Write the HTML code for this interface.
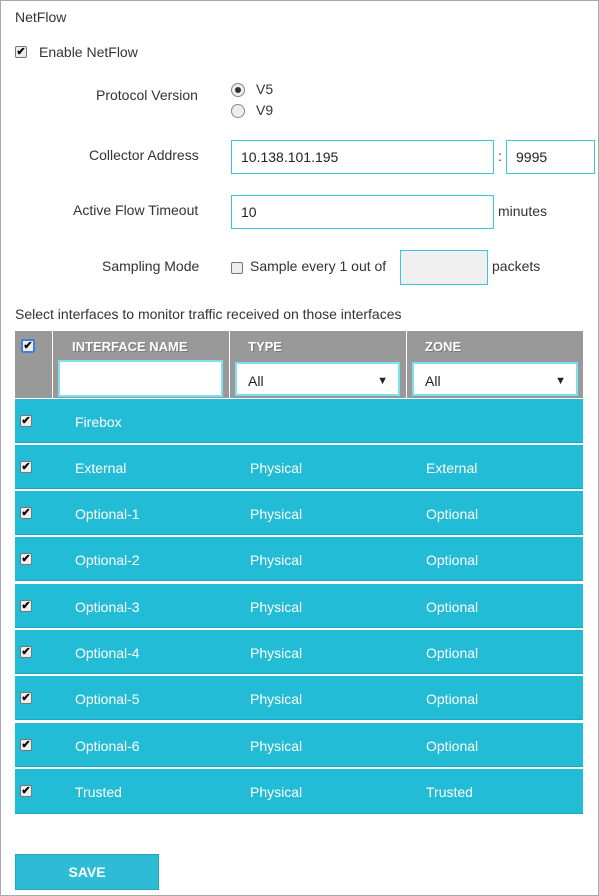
<!DOCTYPE html>
<html><head><style>
*{box-sizing:border-box;margin:0;padding:0}
body{width:599px;height:896px;position:relative;background:#fff;font-family:"Liberation Sans",sans-serif;font-size:14px;color:#333;overflow:hidden}
.frame{position:absolute;left:0;top:0;width:599px;height:896px;border:1px solid #aaa}
.a{position:absolute;white-space:nowrap}
.inp{position:absolute;border:1px solid #3cc6de;background:#fff;font-size:14px;padding-left:9px;line-height:32px;color:#222}
.cb{position:absolute;width:12px;height:12px;border:1px solid #777;border-radius:2px;background:#eee;font-size:11px;line-height:10px;text-align:center;color:#000;font-weight:bold}
.rad{position:absolute;width:14px;height:14px;border:1px solid #888;border-radius:50%;background:#eee}
.hdr{position:absolute;top:331px;height:67px;background:#999}
.ht{position:absolute;top:339px;color:#fff;font-weight:bold;font-size:13px;text-shadow:1px 1px 0 #777}
.row{position:absolute;left:15px;width:568px;height:44px;background:#22bcd7;border-bottom:1px solid #1aa5c0}
.row span{position:absolute;top:15px;color:#fff;font-size:14px}
.sel{position:absolute;top:362px;height:34px;background:#fff;border:2px solid #7ee0ef;padding-left:11px;line-height:34px;font-size:14px;color:#222}
.sel:after{content:"▼";position:absolute;right:10px;top:0;font-size:11px}
</style></head><body>
<div class="frame"></div>
<div class="a" style="left:15px;top:9px">NetFlow</div>
<div class="cb" style="left:15px;top:46px">✔</div>
<div class="a" style="left:39px;top:44px">Enable NetFlow</div>
<div class="a" style="left:96px;top:87px">Protocol Version</div>
<div class="rad" style="left:231px;top:83px"><div style="width:6px;height:6px;background:#333;border-radius:50%;margin:3px"></div></div>
<div class="a" style="left:256px;top:81px">V5</div>
<div class="rad" style="left:231px;top:104px"></div>
<div class="a" style="left:256px;top:102px">V9</div>
<div class="a" style="left:89px;top:147px">Collector Address</div>
<div class="inp" style="left:231px;top:140px;width:263px;height:34px">10.138.101.195</div>
<div class="a" style="left:498px;top:148px">:</div>
<div class="inp" style="left:506px;top:140px;width:89px;height:34px">9995</div>
<div class="a" style="left:73px;top:202px">Active Flow Timeout</div>
<div class="inp" style="left:231px;top:195px;width:263px;height:34px">10</div>
<div class="a" style="left:498px;top:203px">minutes</div>
<div class="a" style="left:102px;top:258px">Sampling Mode</div>
<div class="cb" style="left:231px;top:262px"></div>
<div class="a" style="left:250px;top:258px">Sample every 1 out of</div>
<div class="inp" style="left:400px;top:250px;width:88px;height:35px;background:#efefef"></div>
<div class="a" style="left:492px;top:258px">packets</div>
<div class="a" style="left:15px;top:306px">Select interfaces to monitor traffic received on those interfaces</div>
<div class="hdr" style="left:15px;width:37px"></div>
<div class="hdr" style="left:53px;width:176px"></div>
<div class="hdr" style="left:230px;width:176px"></div>
<div class="hdr" style="left:407px;width:176px"></div>
<div class="cb" style="left:21px;top:339px;border:2px solid #3b7fe0;width:14px;height:14px">✔</div>
<div class="ht" style="left:72px">INTERFACE NAME</div>
<div class="ht" style="left:248px">TYPE</div>
<div class="ht" style="left:425px">ZONE</div>
<div class="a" style="left:58px;width:165px;top:360px;height:37px;background:#fff;border:2px solid #7ee0ef"></div>
<div class="sel" style="left:235px;width:165px">All</div>
<div class="sel" style="left:412px;width:166px">All</div>
<div class="row" style="top:399px"><div class="cb" style="left:5px;top:16px">✔</div><span style="left:60px">Firebox</span></div>
<div class="row" style="top:445px"><div class="cb" style="left:5px;top:16px">✔</div><span style="left:60px">External</span><span style="left:235px">Physical</span><span style="left:411px">External</span></div>
<div class="row" style="top:491px"><div class="cb" style="left:5px;top:16px">✔</div><span style="left:60px">Optional-1</span><span style="left:235px">Physical</span><span style="left:411px">Optional</span></div>
<div class="row" style="top:537px"><div class="cb" style="left:5px;top:16px">✔</div><span style="left:60px">Optional-2</span><span style="left:235px">Physical</span><span style="left:411px">Optional</span></div>
<div class="row" style="top:584px"><div class="cb" style="left:5px;top:16px">✔</div><span style="left:60px">Optional-3</span><span style="left:235px">Physical</span><span style="left:411px">Optional</span></div>
<div class="row" style="top:630px"><div class="cb" style="left:5px;top:16px">✔</div><span style="left:60px">Optional-4</span><span style="left:235px">Physical</span><span style="left:411px">Optional</span></div>
<div class="row" style="top:676px"><div class="cb" style="left:5px;top:16px">✔</div><span style="left:60px">Optional-5</span><span style="left:235px">Physical</span><span style="left:411px">Optional</span></div>
<div class="row" style="top:723px"><div class="cb" style="left:5px;top:16px">✔</div><span style="left:60px">Optional-6</span><span style="left:235px">Physical</span><span style="left:411px">Optional</span></div>
<div class="row" style="top:769px;height:45px"><div class="cb" style="left:5px;top:16px">✔</div><span style="left:60px">Trusted</span><span style="left:235px">Physical</span><span style="left:411px">Trusted</span></div>
<div class="a" style="left:15px;top:854px;width:144px;height:36px;background:#2dbbd5;border:1px solid #1aa5c0;color:#fff;font-weight:bold;text-align:center;line-height:34px;font-size:14px">SAVE</div>
</body></html>
